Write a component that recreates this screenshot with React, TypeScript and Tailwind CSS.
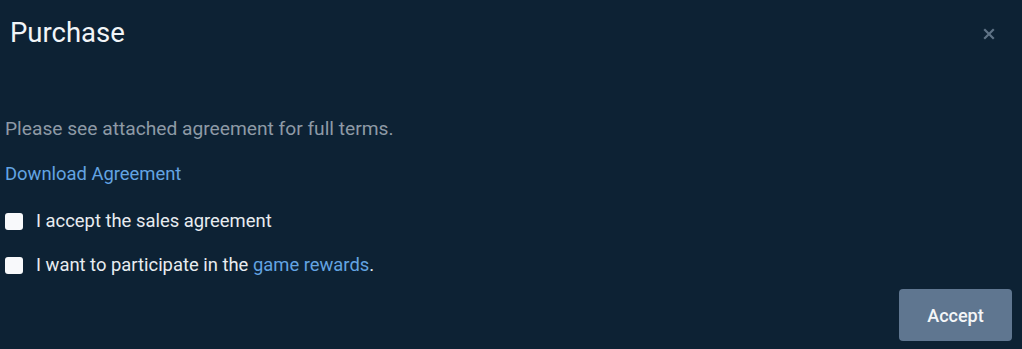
import React from "react";

export default function App() {
  return (
    <div
      className="w-[1022px] h-[349px] bg-[#0d2234] overflow-hidden flex flex-col"
      style={{ fontFamily: "Roboto, 'Liberation Sans', sans-serif" }}
    >
      <div className="flex items-start justify-between pl-[10px] pr-[27px] pt-[17px]">
        <h1 className="text-[27.5px] leading-[32px] text-[#f2f5f8] font-normal">Purchase</h1>
        <button className="mt-[11px] text-[#5f7386]">
          <svg width="12" height="12" viewBox="0 0 12 12" fill="none" stroke="currentColor" strokeWidth="2.2" strokeLinecap="square">
            <path d="M2 2 L10 10 M10 2 L2 10" />
          </svg>
        </button>
      </div>
      <div className="flex flex-col pl-[5px] pt-[69px]">
        <p className="text-[19.2px] leading-[22px] text-[#8e9aa6]">Please see attached agreement for full terms.</p>
        <a className="mt-[23px] text-[18.4px] leading-[22px] text-[#63a4e2]">Download Agreement</a>
        <label className="mt-[25px] flex items-center gap-[13px] text-[18.4px] leading-[22px] text-[#e8ecf0]">
          <span className="w-[18px] h-[17px] rounded-[3px] bg-[#f8f9fb]" />
          I accept the sales agreement
        </label>
        <label className="mt-[22px] flex items-center gap-[13px] text-[18.4px] leading-[22px] text-[#e8ecf0]">
          <span className="w-[18px] h-[17px] rounded-[3px] bg-[#f8f9fb]" />
          <span>
            I want to participate in the <a className="text-[#63a4e2]">game rewards</a>.
          </span>
        </label>
      </div>
      <div className="flex justify-end pr-[10px] mt-[13px]">
        <button className="w-[113px] h-[52px] rounded-[4px] bg-[#5f7690] text-[#f4f6f8] text-[18px] font-medium">
          Accept
        </button>
      </div>
    </div>
  );
}
